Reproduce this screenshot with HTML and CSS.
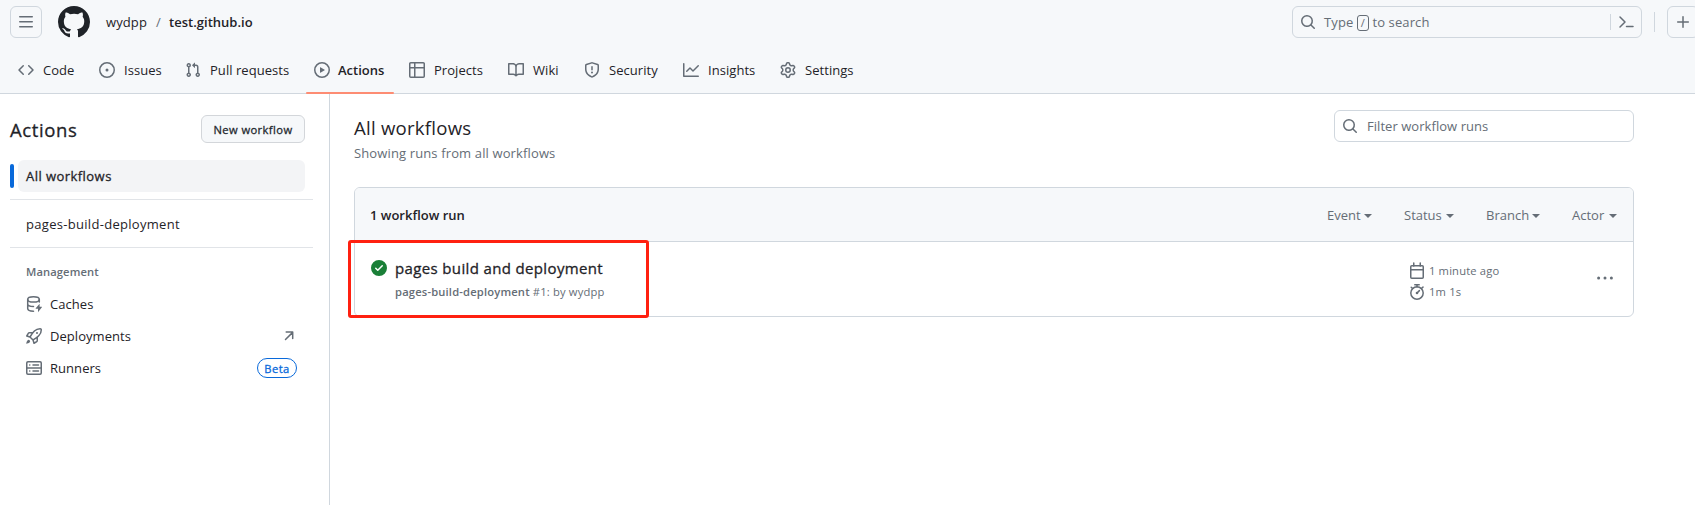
FILE: index.html
```html
<!DOCTYPE html>
<html lang="en">
<head>
<meta charset="utf-8">
<title>Actions · wydpp/test.github.io</title>
<link rel="stylesheet" href="styles.css">
</head>
<body>
<header class="header">
  <div class="topbar">
    <button class="icon-button"><svg class="icon" viewBox="0 0 16 16"><path d="M1 2.75A.75.75 0 0 1 1.75 2h12.5a.75.75 0 0 1 0 1.5H1.75A.75.75 0 0 1 1 2.75Zm0 5A.75.75 0 0 1 1.75 7h12.5a.75.75 0 0 1 0 1.5H1.75A.75.75 0 0 1 1 7.75ZM1.75 12h12.5a.75.75 0 0 1 0 1.5H1.75a.75.75 0 0 1 0-1.5Z"/></svg></button>
    <svg class="logo" viewBox="0 0 16 16"><path d="M8 0c4.42 0 8 3.58 8 8a8.013 8.013 0 0 1-5.45 7.59c-.4.08-.55-.17-.55-.38 0-.27.01-1.13.01-2.2 0-.75-.25-1.23-.54-1.48 1.78-.2 3.65-.88 3.65-3.95 0-.88-.31-1.59-.82-2.15.08-.2.36-1.02-.08-2.12 0 0-.67-.22-2.2.82-.64-.18-1.32-.27-2-.27-.68 0-1.36.09-2 .27-1.53-1.03-2.2-.82-2.2-.82-.44 1.1-.16 1.92-.08 2.12-.51.56-.82 1.28-.82 2.15 0 3.06 1.86 3.75 3.64 3.95-.23.2-.44.55-.51 1.07-.46.21-1.61.55-2.33-.66-.15-.24-.6-.83-1.23-.82-.67.01-.27.38.01.53.34.19.73.9.82 1.13.16.45.68 1.31 2.69.94 0 .67.01 1.3.01 1.49 0 .21-.15.45-.55.38A7.995 7.995 0 0 1 0 8c0-4.42 3.58-8 8-8Z"/></svg>
    <div class="crumbs"><span class="crumb-owner">wydpp</span><span class="slash">/</span><span class="crumb-repo">test.github.io</span></div>
    <div class="search">
      <svg class="icon" viewBox="0 0 16 16"><path d="M10.68 11.74a6 6 0 0 1-7.922-8.982 6 6 0 0 1 8.982 7.922l3.04 3.04a.749.749 0 0 1-.326 1.275.749.749 0 0 1-.734-.215ZM11.5 7a4.499 4.499 0 1 0-8.997 0A4.499 4.499 0 0 0 11.5 7Z"/></svg>
      <span class="search-label">Type <kbd class="key">/</kbd> to search</span>
      <span class="search-divider"></span>
      <svg class="icon line command" viewBox="0 0 16 16"><path d="M2 3l5 5-5 5M8.5 12.5H15"/></svg>
    </div>
    <span class="top-divider"></span>
    <button class="icon-button add"><svg class="icon line" viewBox="0 0 16 16"><path d="M8 2.7v10.6M2.7 8h10.6"/></svg></button>
  </div>
  <nav class="tabs">
    <a class="tab code"><svg class="icon" viewBox="0 0 16 16"><path d="m11.28 3.22 4.25 4.25a.75.75 0 0 1 0 1.06l-4.25 4.25a.749.749 0 0 1-1.275-.326.749.749 0 0 1 .215-.734L13.94 8l-3.72-3.72a.749.749 0 0 1 .326-1.275.749.749 0 0 1 .734.215Zm-6.56 0a.751.751 0 0 1 1.042.018.751.751 0 0 1 .018 1.042L2.06 8l3.72 3.72a.749.749 0 0 1-.326 1.275.749.749 0 0 1-.734-.215L.47 8.53a.75.75 0 0 1 0-1.06Z"/></svg><span>Code</span></a>
    <a class="tab issues"><svg class="icon" viewBox="0 0 16 16"><path d="M8 9.5a1.5 1.5 0 1 0 0-3 1.5 1.5 0 0 0 0 3Z"/><path d="M8 0a8 8 0 1 1 0 16A8 8 0 0 1 8 0ZM1.5 8a6.5 6.5 0 1 0 13 0 6.5 6.5 0 0 0-13 0Z"/></svg><span>Issues</span></a>
    <a class="tab pulls"><svg class="icon" viewBox="0 0 16 16"><path d="M1.5 3.25a2.25 2.25 0 1 1 3 2.122v5.256a2.251 2.251 0 1 1-1.5 0V5.372A2.25 2.25 0 0 1 1.5 3.25Zm5.677-.177L9.573.677A.25.25 0 0 1 10 .854V2.5h1A2.5 2.5 0 0 1 13.5 5v5.628a2.251 2.251 0 1 1-1.5 0V5a1 1 0 0 0-1-1h-1v1.646a.25.25 0 0 1-.427.177L7.177 3.427a.25.25 0 0 1 0-.354ZM3.75 2.5a.75.75 0 1 0 0 1.5.75.75 0 0 0 0-1.5Zm0 9.5a.75.75 0 1 0 0 1.5.75.75 0 0 0 0-1.5Zm8.25.75a.75.75 0 1 0 1.5 0 .75.75 0 0 0-1.5 0Z"/></svg><span>Pull requests</span></a>
    <a class="tab actions selected"><svg class="icon" viewBox="0 0 16 16"><path d="M8 0a8 8 0 1 1 0 16A8 8 0 0 1 8 0ZM1.5 8a6.5 6.5 0 1 0 13 0 6.5 6.5 0 0 0-13 0Zm4.879-2.773 4.264 2.559a.25.25 0 0 1 0 .428l-4.264 2.559A.25.25 0 0 1 6 10.559V5.442a.25.25 0 0 1 .379-.215Z"/></svg><span>Actions</span></a>
    <a class="tab projects"><svg class="icon" viewBox="0 0 16 16"><path d="M0 1.75C0 .784.784 0 1.75 0h12.5C15.216 0 16 .784 16 1.75v12.5A1.75 1.75 0 0 1 14.25 16H1.75A1.75 1.75 0 0 1 0 14.25ZM6.5 6.5v8h7.75a.25.25 0 0 0 .25-.25V6.5Zm8-1.5V1.75a.25.25 0 0 0-.25-.25H6.5V5Zm-13 1.5v7.75c0 .138.112.25.25.25H5v-8ZM5 5V1.5H1.75a.25.25 0 0 0-.25.25V5Z"/></svg><span>Projects</span></a>
    <a class="tab wiki"><svg class="icon" viewBox="0 0 16 16"><path d="M0 1.75A.75.75 0 0 1 .75 1h4.253c1.227 0 2.317.59 3 1.501A3.743 3.743 0 0 1 11.006 1h4.245a.75.75 0 0 1 .75.75v10.5a.75.75 0 0 1-.75.75h-4.507a2.25 2.25 0 0 0-1.591.659l-.622.621a.75.75 0 0 1-1.06 0l-.622-.621A2.25 2.25 0 0 0 5.258 13H.75a.75.75 0 0 1-.75-.75Zm7.251 10.324.004-5.073-.002-2.253A2.25 2.25 0 0 0 5.003 2.5H1.5v9h3.757a3.75 3.75 0 0 1 1.994.574ZM8.755 4.75l-.004 7.322a3.752 3.752 0 0 1 1.992-.572H14.5v-9h-3.495a2.25 2.25 0 0 0-2.25 2.25Z"/></svg><span>Wiki</span></a>
    <a class="tab security"><svg class="icon" viewBox="0 0 16 16"><path d="M7.467.133a1.748 1.748 0 0 1 1.066 0l5.25 1.68A1.75 1.75 0 0 1 15 3.48V7c0 1.566-.32 3.182-1.303 4.682-.983 1.498-2.585 2.813-5.032 3.855a1.697 1.697 0 0 1-1.33 0c-2.447-1.042-4.049-2.357-5.032-3.855C1.32 10.182 1 8.566 1 7V3.48a1.75 1.75 0 0 1 1.217-1.667Zm.61 1.429a.25.25 0 0 0-.153 0l-5.25 1.68a.25.25 0 0 0-.174.238V7c0 1.358.275 2.666 1.057 3.86.784 1.194 2.121 2.34 4.366 3.297a.196.196 0 0 0 .154 0c2.245-.956 3.582-2.104 4.366-3.298C13.225 9.666 13.5 8.36 13.5 7V3.48a.251.251 0 0 0-.174-.237l-5.25-1.68ZM8.75 4.75v3a.75.75 0 0 1-1.5 0v-3a.75.75 0 0 1 1.5 0ZM9 10.5a1 1 0 1 1-2 0 1 1 0 0 1 2 0Z"/></svg><span>Security</span></a>
    <a class="tab insights"><svg class="icon" viewBox="0 0 16 16"><path d="M1.5 1.75V13.5h13.75a.75.75 0 0 1 0 1.5H.75a.75.75 0 0 1-.75-.75V1.75a.75.75 0 0 1 1.5 0Zm14.28 2.53-5.25 5.25a.75.75 0 0 1-1.06 0L7 7.06 4.28 9.78a.751.751 0 0 1-1.042-.018.751.751 0 0 1-.018-1.042l3.25-3.25a.75.75 0 0 1 1.06 0L10 7.94l4.72-4.72a.751.751 0 0 1 1.042.018.751.751 0 0 1 .018 1.042Z"/></svg><span>Insights</span></a>
    <a class="tab settings"><svg class="icon" viewBox="0 0 16 16"><path d="M8 0a8.2 8.2 0 0 1 .701.031C9.444.095 9.99.645 10.16 1.29l.288 1.107c.018.066.079.158.212.224.231.114.454.243.668.386.123.082.233.09.299.071l1.103-.303c.644-.176 1.392.021 1.82.63.27.385.506.792.704 1.218.315.675.111 1.422-.364 1.891l-.814.806c-.049.048-.098.147-.088.294.016.257.016.515 0 .772-.01.147.038.246.088.294l.814.806c.475.469.679 1.216.364 1.891a7.977 7.977 0 0 1-.704 1.217c-.428.61-1.176.807-1.82.63l-1.102-.302c-.067-.019-.177-.011-.3.071a5.909 5.909 0 0 1-.668.386c-.133.066-.194.158-.211.224l-.29 1.106c-.168.646-.715 1.196-1.458 1.26a8.006 8.006 0 0 1-1.402 0c-.743-.064-1.289-.614-1.458-1.26l-.289-1.106c-.018-.066-.079-.158-.212-.224a5.738 5.738 0 0 1-.668-.386c-.123-.082-.233-.09-.299-.071l-1.103.303c-.644.176-1.392-.021-1.82-.63a8.12 8.12 0 0 1-.704-1.218c-.315-.675-.111-1.422.363-1.891l.815-.806c.05-.048.098-.147.088-.294a6.214 6.214 0 0 1 0-.772c.01-.147-.038-.246-.088-.294l-.815-.806C.635 6.045.431 5.298.746 4.623a7.92 7.92 0 0 1 .704-1.217c.428-.61 1.176-.807 1.82-.63l1.102.302c.067.019.177.011.3-.071.214-.143.437-.272.668-.386.133-.066.194-.158.211-.224l.29-1.106C6.009.645 6.556.095 7.299.03 7.53.01 7.764 0 8 0Zm-.571 1.525c-.036.003-.108.036-.137.146l-.289 1.105c-.147.561-.549.967-.998 1.189-.173.086-.34.183-.5.29-.417.278-.97.423-1.529.27l-1.103-.303c-.109-.03-.175.016-.195.045-.22.312-.412.644-.573.99-.014.031-.021.11.059.19l.815.806c.411.406.562.957.53 1.456a4.709 4.709 0 0 0 0 .582c.032.499-.119 1.05-.53 1.456l-.815.806c-.081.08-.073.159-.059.19.162.346.353.677.573.989.02.03.085.076.195.046l1.102-.303c.56-.153 1.113-.008 1.53.27.161.107.328.204.501.29.447.222.85.629.997 1.189l.289 1.105c.029.109.101.143.137.146a6.6 6.6 0 0 0 1.142 0c.036-.003.108-.036.137-.146l.289-1.105c.147-.561.549-.967.998-1.189.173-.086.34-.183.5-.29.417-.278.97-.423 1.529-.27l1.103.303c.109.029.175-.016.195-.045.22-.313.411-.644.573-.99.014-.031.021-.11-.059-.19l-.815-.806c-.411-.406-.562-.957-.53-1.456a4.709 4.709 0 0 0 0-.582c-.032-.499.119-1.05.53-1.456l.815-.806c.081-.08.073-.159.059-.19a6.464 6.464 0 0 0-.573-.989c-.02-.03-.085-.076-.195-.046l-1.102.303c-.56.153-1.113.008-1.53-.27a4.44 4.44 0 0 0-.501-.29c-.447-.222-.85-.629-.997-1.189l-.289-1.105c-.029-.11-.101-.143-.137-.146a6.6 6.6 0 0 0-1.142 0ZM11 8a3 3 0 1 1-6 0 3 3 0 0 1 6 0ZM9.5 8a1.5 1.5 0 1 0-3.001.001A1.5 1.5 0 0 0 9.5 8Z"/></svg><span>Settings</span></a>
  </nav>
</header>
<div class="layout">
  <aside class="sidebar">
    <div class="side-head"><h2 class="side-title">Actions</h2><button class="new-button"><span>New workflow</span></button></div>
    <div class="current"><span class="marker"></span><a class="current-link">All workflows</a></div>
    <div class="group"><a class="side-link workflow"><span>pages-build-deployment</span></a></div>
    <div class="group management">
      <h3 class="group-title">Management</h3>
      <a class="side-link"><svg class="icon line" viewBox="0 0 16 16"><ellipse cx="7.5" cy="3.4" rx="5.8" ry="2.6"/><path d="M1.7 3.4v9.2c0 1.4 2.4 2.6 5.8 2.6M1.7 8c0 1.4 2.4 2.5 5.8 2.5M13.3 3.4V6"/><path class="solid" d="M13.6 7.8v3h2.1c.3 0 .4.3.2.5L12 16.2v-3.4H9.9c-.3 0-.4-.3-.2-.5Z"/></svg><span>Caches</span></a>
      <a class="side-link"><svg class="icon" viewBox="0 0 16 16"><path d="M14.064 0h.186C15.216 0 16 .784 16 1.75v.186a8.752 8.752 0 0 1-2.564 6.186l-.458.459c-.314.314-.641.616-.979.904v3.207c0 .608-.315 1.172-.833 1.49l-2.774 1.707a.749.749 0 0 1-1.11-.418l-.954-3.102a1.214 1.214 0 0 1-.145-.125L3.754 9.816a1.218 1.218 0 0 1-.124-.145L.528 8.717a.749.749 0 0 1-.418-1.11l1.71-2.774A1.748 1.748 0 0 1 3.31 4h3.204c.288-.338.59-.665.904-.979l.459-.458A8.749 8.749 0 0 1 14.064 0ZM8.938 3.623h-.002l-.458.458c-.76.76-1.437 1.598-2.02 2.5l-1.5 2.317 2.143 2.143 2.317-1.5c.902-.583 1.74-1.26 2.499-2.02l.459-.458a7.25 7.25 0 0 0 2.123-5.127V1.75a.25.25 0 0 0-.25-.25h-.186a7.249 7.249 0 0 0-5.125 2.123ZM3.56 14.56c-.732.732-2.334 1.045-3.005 1.148a.234.234 0 0 1-.201-.064.234.234 0 0 1-.064-.201c.103-.671.416-2.273 1.15-3.003a1.502 1.502 0 1 1 2.12 2.12Zm6.94-3.935c-.088.06-.177.118-.266.175l-2.35 1.521.548 1.783 1.949-1.2a.25.25 0 0 0 .119-.213ZM3.678 8.116 5.2 5.766c.058-.09.117-.178.176-.266H3.309a.25.25 0 0 0-.213.119l-1.2 1.95ZM12 5a1 1 0 1 1-2 0 1 1 0 0 1 2 0Z"/></svg><span>Deployments</span><svg class="icon line trailing" viewBox="0 0 16 16"><path d="M4.5 11.5 11.4 4.6M5.2 4.1h6.5v6.5"/></svg></a>
      <a class="side-link"><svg class="icon line" viewBox="0 0 16 16"><rect x=".75" y="1.75" width="14.5" height="12.5" rx="1.2"/><path d="M1 8h14M3.7 5h.1M7 5h5.5M3.7 11h.1M7 11h5.5"/></svg><span>Runners</span><span class="beta">Beta</span></a>
    </div>
  </aside>
  <main class="main">
    <div class="main-head">
      <div><h1 class="title">All workflows</h1><p class="subtitle">Showing runs from all workflows</p></div>
      <div class="filter"><svg class="icon" viewBox="0 0 16 16"><path d="M10.68 11.74a6 6 0 0 1-7.922-8.982 6 6 0 0 1 8.982 7.922l3.04 3.04a.749.749 0 0 1-.326 1.275.749.749 0 0 1-.734-.215ZM11.5 7a4.499 4.499 0 1 0-8.997 0A4.499 4.499 0 0 0 11.5 7Z"/></svg><span>Filter workflow runs</span></div>
    </div>
    <section class="runs">
      <div class="runs-head">
        <strong class="count">1 workflow run</strong>
        <span class="menu event">Event</span><span class="menu status">Status</span><span class="menu branch">Branch</span><span class="menu actor">Actor</span>
      </div>
      <div class="run">
        <svg class="icon success" viewBox="0 0 16 16"><path d="M8 16A8 8 0 1 1 8 0a8 8 0 0 1 0 16Zm3.78-9.72a.751.751 0 0 0-.018-1.042.751.751 0 0 0-1.042-.018L6.75 9.19 5.28 7.72a.751.751 0 0 0-1.042.018.751.751 0 0 0-.018 1.042l2 2a.75.75 0 0 0 1.06 0Z"/></svg>
        <div class="run-text"><a class="run-title">pages build and deployment</a><span class="run-meta"><b>pages-build-deployment</b> <span>#1: by wydpp</span></span></div>
        <div class="times">
          <div class="time"><svg class="icon line" viewBox="0 0 16 16"><rect x="1.75" y="2.75" width="12.5" height="12.5" rx="1"/><path d="M2 6.75h12M4.75 0v3M11.25 0v3"/></svg><span class="ago">1 minute ago</span></div>
          <div class="time"><svg class="icon line" viewBox="0 0 16 16"><circle cx="8" cy="9" r="6.2"/><path d="M5.8.75h4.4M8 1v2M8 9l2.4-2.4M12.4 4.5l1.6-1.4M3.6 4.5 2.2 3.2"/><circle class="solid" cx="8" cy="9" r="1.3"/></svg><span>1m 1s</span></div>
        </div>
        <svg class="icon kebab" viewBox="0 0 16 16"><circle cx="1.6" cy="8" r="1.5"/><circle cx="8" cy="8" r="1.5"/><circle cx="14.4" cy="8" r="1.5"/></svg>
        <div class="highlight"></div>
      </div>
    </section>
  </main>
</div>
</body>
</html>
```
FILE: styles.css
```css
* { box-sizing: border-box; }
body { margin: 0; height: 505px; overflow: hidden; display: flex; flex-direction: column; background: #fff; color: #1f2328; font: 13px/20px "Open Sans", "Noto Sans", sans-serif; }
h1, h2, h3, p { margin: 0; }
button { font: inherit; color: inherit; padding: 0; }
span, a, h1, h2, h3, p, strong { white-space: nowrap; }
.icon { width: 16px; height: 16px; flex: none; fill: #656d76; display: block; overflow: visible; }
.line { fill: none; stroke: #656d76; stroke-width: 1.5; stroke-linecap: round; stroke-linejoin: round; }
.line .solid { fill: #656d76; stroke: none; }

.header { height: 94px; flex: none; background: #f6f8fa; border-bottom: 1px solid #d0d7de; }
.topbar { display: flex; align-items: center; height: 44px; padding-left: 10px; }
.icon-button { width: 32px; height: 32px; flex: none; border: 1px solid #d0d7de; border-radius: 6px; background: transparent; display: flex; align-items: center; justify-content: center; }
.logo { width: 32px; height: 32px; margin-left: 16px; fill: #1f2328; }
.crumbs { display: flex; margin-left: 16px; }
.slash { margin: 0 7px 0 9px; color: #656d76; width: 6px; }
.crumb-owner { width: 41px; letter-spacing: .1px; }
.crumb-repo { font-weight: 600; letter-spacing: .02px; }
.search { width: 350px; height: 32px; margin-left: auto; border: 1px solid #d0d7de; border-radius: 6px; display: flex; align-items: center; padding: 0 7px; color: #656d76; }
.search-label { margin-left: 8px; letter-spacing: .12px; }
.key { display: inline-block; width: 12px; height: 16px; border: 1px solid #656d76; border-radius: 3px; font: 11px/14px "Open Sans", sans-serif; text-align: center; vertical-align: 0; }
.search-divider { width: 1px; height: 16px; background: #d0d7de; margin-left: auto; margin-right: 7px; }
.top-divider { width: 1px; height: 20px; background: #d0d7de; margin: 0 12px; }
.add { margin-right: -4px; }

.tabs { display: flex; gap: 8px; padding-left: 10px; height: 50px; letter-spacing: .05px; }
.tab { display: flex; align-items: center; gap: 8px; padding: 2px 0 0 8px; height: 50px; position: relative; }
.tab.code { width: 73px; gap: 9px; }
.tab.issues { width: 78px; gap: 9px; }
.tab.pulls { width: 121px; gap: 9px; }
.tab.actions { width: 88px; font-weight: 600; letter-spacing: 0; }
.tab.projects { width: 91px; margin-left: -1px; gap: 9px; }
.tab.wiki { width: 68px; gap: 9px; }
.tab.security { width: 91px; gap: 9px; }
.tab.insights { width: 89px; gap: 9px; }
.tab.settings { gap: 9px; }
.selected::after { content: ""; position: absolute; left: 0; right: 0; bottom: 0; height: 2px; background: #fd8c73; border-radius: 2px; }

.layout { display: flex; flex: 1; }
.sidebar { width: 330px; border-right: 1px solid #d0d7de; padding: 21px 16px 0 10px; }
.side-head { display: flex; justify-content: space-between; align-items: center; height: 28px; padding-right: 8px; }
.side-title { font-size: 18.5px; font-weight: 400; letter-spacing: .6px; padding-top: 2px; }
.side-title, .new-button, .current-link, .run-title, .beta { -webkit-text-stroke: .3px currentColor; }
.new-button { width: 104px; height: 28px; border: 1px solid #d3d6da; border-radius: 6px; background: #f6f8fa; font-size: 11.2px; letter-spacing: .4px; color: #24292f; padding-top: 1px; }
.current { display: flex; align-items: center; gap: 4px; margin: 17px 8px 7px 0; height: 32px; }
.marker { width: 4px; height: 24px; border-radius: 6px; background: #0969da; }
.current-link { flex: 1; height: 32px; border-radius: 6px; background: #f3f4f6; padding: 6px 8px; letter-spacing: .45px; }
.group { border-top: 1px solid #e1e4e8; padding: 8px 0 7px; }
.side-link { display: flex; align-items: center; gap: 8px; height: 32px; padding: 0 16px; letter-spacing: .05px; }
.workflow { letter-spacing: .3px; }
.group-title { font-size: 11.2px; font-weight: 600; color: #656d76; margin: 6px 16px 7px; line-height: 18px; letter-spacing: .1px; }
.management { padding-top: 9px; }
.trailing { margin-left: auto; }
.beta { margin-left: auto; width: 40px; height: 20px; border: 1px solid #0969da; border-radius: 10px; color: #0969da; font-size: 11.2px; line-height: 19px; text-align: center; letter-spacing: .4px; }

.main { flex: 1; padding: 16px 61px 0 24px; }
.main-head { display: flex; justify-content: space-between; height: 77px; }
.title { font-size: 18.6px; font-weight: 400; line-height: 26px; margin-top: 5px; letter-spacing: .24px; }
.subtitle { color: #656d76; line-height: 20px; margin-top: 2px; letter-spacing: .13px; }
.filter { width: 300px; height: 32px; border: 1px solid #d0d7de; border-radius: 6px; display: flex; align-items: center; gap: 9px; padding-left: 7px; color: #656d76; letter-spacing: .05px; }
.runs { border: 1px solid #d0d7de; border-radius: 6px; height: 130px; }
.runs-head { height: 54px; background: #f6f8fa; border-bottom: 1px solid #d0d7de; border-radius: 5px 5px 0 0; display: flex; align-items: center; padding-left: 15px; color: #656d76; padding-top: 1px; }
.count { font-weight: 600; color: #1f2328; margin-right: auto; }
.menu { display: flex; align-items: center; justify-content: space-between; }
.menu::after { content: ""; border: 4px solid transparent; border-top-color: #656d76; border-bottom: 0; margin-top: 2px; }
.event { width: 45px; margin-right: 32px; }
.status { width: 50px; margin-right: 32px; }
.branch { width: 54px; margin-right: 32px; }
.actor { width: 45px; margin-right: 16px; }
.run { position: relative; display: flex; height: 74px; padding-left: 16px; }
.success { fill: #1a7f37; margin-top: 18px; }
.run-text { display: flex; flex-direction: column; margin: 14px auto 0 8px; }
.run-title { font-size: 15px; line-height: 24px; letter-spacing: .36px; }
.run-meta { font-size: 11.2px; line-height: 18px; margin-top: 3px; color: #656d76; letter-spacing: .17px; }
.run-meta b { font-weight: 600; }
.times { width: 188px; padding-top: 18px; color: #656d76; font-size: 11.2px; letter-spacing: .16px; }
.time { display: flex; align-items: center; gap: 4px; height: 21px; }
.kebab { margin: 28px 20px 0 0; }
.highlight { position: absolute; left: -7px; top: -2px; width: 301px; height: 78px; border: 3px solid #ff2010; border-radius: 3px; }
```
